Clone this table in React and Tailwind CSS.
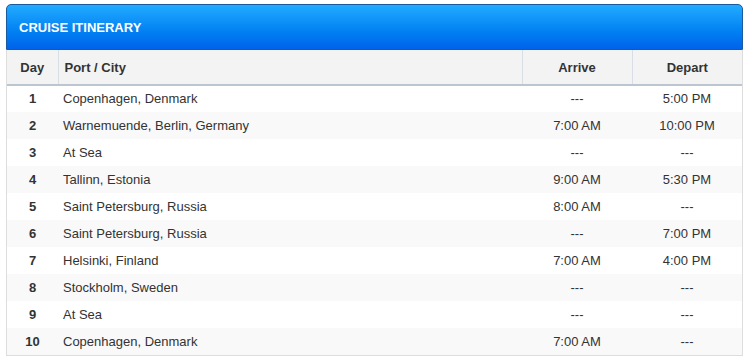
const rows = [
  [1, "Copenhagen, Denmark", "---", "5:00 PM"],
  [2, "Warnemuende, Berlin, Germany", "7:00 AM", "10:00 PM"],
  [3, "At Sea", "---", "---"],
  [4, "Tallinn, Estonia", "9:00 AM", "5:30 PM"],
  [5, "Saint Petersburg, Russia", "8:00 AM", "---"],
  [6, "Saint Petersburg, Russia", "---", "7:00 PM"],
  [7, "Helsinki, Finland", "7:00 AM", "4:00 PM"],
  [8, "Stockholm, Sweden", "---", "---"],
  [9, "At Sea", "---", "---"],
  [10, "Copenhagen, Denmark", "7:00 AM", "---"],
];

export default function App() {
  return (
    <div className="w-[751px] h-[363px] bg-white pt-[4px] pl-[6px] font-['Liberation_Sans',Arial,sans-serif] text-[13px] text-[#333]">
      <div className="w-[737px]">
        <div className="h-[46px] flex items-center pt-[2px] px-[12px] rounded-t-[5px] border border-[#1b5a9e] bg-gradient-to-b from-[#22abff] to-[#0062ea]">
          <h2 className="text-white font-bold text-[13px]">CRUISE ITINERARY</h2>
        </div>
        <div className="border-x border-b border-[#dddddd]">
          <table className="w-full table-fixed border-collapse">
            <colgroup>
              <col className="w-[51px]" />
              <col />
              <col className="w-[110px]" />
              <col className="w-[110px]" />
            </colgroup>
            <thead>
              <tr className="h-[35px] bg-[#f3f3f3] border-b-2 border-[#bcc6d0] font-bold">
                <th className="text-center pt-[2px] border-r border-[#d7dee6]">Day</th>
                <th className="text-left pt-[2px] pl-[6px]">Port / City</th>
                <th className="text-center pt-[2px] border-x border-[#d7dee6]">Arrive</th>
                <th className="text-center pt-[2px]">Depart</th>
              </tr>
            </thead>
            <tbody>
              {rows.map(([d, port, arr, dep]) => (
                <tr key={d} className={`h-[27px] ${d % 2 === 0 ? "bg-[#f9f9f9]" : "bg-white"}`}>
                  <td className="text-center font-bold">{d}</td>
                  <td className="pl-[5px]">{port}</td>
                  <td className="text-center">{arr}</td>
                  <td className="text-center">{dep}</td>
                </tr>
              ))}
            </tbody>
          </table>
        </div>
      </div>
    </div>
  );
}
